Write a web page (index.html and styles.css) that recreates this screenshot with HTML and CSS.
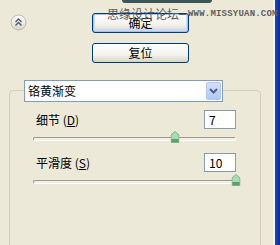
FILE: index.html
```html
<!DOCTYPE html>
<html lang="zh">
<head>
    <meta charset="UTF-8">
    <meta name="viewport" content="width=device-width, initial-scale=1.0">
    <title>铬黄渐变</title>
    <link rel="stylesheet" href="styles.css">
</head>
<body>
    <div class="window">
        <div class="panel">
            <div class="top-tab"></div>

            <div class="head">
                <button class="toggle" type="button" aria-label="收起">
                    <svg width="17" height="17" viewBox="0 0 17 17">
                        <defs>
                            <linearGradient id="tg" x1="0" y1="0" x2="0" y2="1">
                                <stop offset="0" stop-color="#ffffff"/>
                                <stop offset="1" stop-color="#d9d5c7"/>
                            </linearGradient>
                        </defs>
                        <circle cx="8.5" cy="8.5" r="7.5" fill="url(#tg)" stroke="#bdb9a8"/>
                        <path d="M5.5 8 L8.5 5 L11.5 8 M5.5 11.5 L8.5 8.5 L11.5 11.5" fill="none" stroke="#505a6a" stroke-width="1.4"/>
                    </svg>
                </button>
                <div class="actions">
                    <button class="btn btn-default" type="button">确定</button>
                    <button class="btn" type="button">复位</button>
                </div>
            </div>

            <div class="group">
                <div class="combo">
                    <span class="combo-text">铬黄渐变</span>
                    <span class="combo-arrow">
                        <svg width="9" height="6" viewBox="0 0 9 6">
                            <path d="M1 1 L4.5 4.5 L8 1" fill="none" stroke="#4d6185" stroke-width="2"/>
                        </svg>
                    </span>
                </div>

                <div class="field">
                    <span class="label">细节 (<u>D</u>)</span>
                    <span class="value">7</span>
                </div>
                <div class="slider">
                    <div class="track"></div>
                    <span class="thumb" style="left: 70%">
                        <svg width="9" height="12" viewBox="0 0 9 12">
                            <path d="M4.5 0.5 L8.5 4 V11.5 H0.5 V4 Z" fill="#a6dcb3" stroke="#79b488"/>
                            <path d="M1 8 H8 V11 H1 Z" fill="#5c9e6e"/>
                        </svg>
                    </span>
                </div>

                <div class="field field-second">
                    <span class="label">平滑度 (<u>S</u>)</span>
                    <span class="value">10</span>
                </div>
                <div class="slider">
                    <div class="track"></div>
                    <span class="thumb" style="left: 100%">
                        <svg width="9" height="12" viewBox="0 0 9 12">
                            <path d="M4.5 0.5 L8.5 4 V11.5 H0.5 V4 Z" fill="#a6dcb3" stroke="#79b488"/>
                            <path d="M1 8 H8 V11 H1 Z" fill="#5c9e6e"/>
                        </svg>
                    </span>
                </div>
            </div>

            <div class="watermark">思缘设计论坛<span class="dash"></span><span class="site">WWW.MISSYUAN.COM</span></div>
        </div>
        <div class="edge"></div>
    </div>
</body>
</html>
```

FILE: styles.css
```css
body {
    margin: 0;
    padding: 0;
    background-color: #ece9d8; /* XP dialog colour */
    font-family: "Noto Sans CJK SC", "Liberation Sans", sans-serif;
    font-size: 12px;
    color: #000;
}

.window {
    display: flex;
    width: 280px;
    height: 245px;
    overflow: hidden;
}

.panel {
    position: relative;
    width: 273px;
}

/* right window frame */
.edge {
    width: 5px;
    border-left: 2px solid #f6f5ef;
    background: linear-gradient(to right, #1a47bd, #0a2f9c);
}

.top-tab {
    width: 90px;
    height: 3px;
    margin-left: 122px;
    background-color: #3e5459;
    border-radius: 0 0 6px 6px;
}

.head {
    display: flex;
    padding-top: 10px;
}

.toggle {
    width: 17px;
    height: 17px;
    margin: 1px 0 0 10px;
    padding: 0;
    border: none;
    background: none;
    line-height: 0;
}

.actions {
    display: flex;
    flex-direction: column;
    gap: 10px;
    margin-left: 65px;
}

.btn {
    width: 97px;
    height: 20px;
    padding: 0;
    border: 1px solid #003c74;
    border-radius: 3px;
    background: linear-gradient(#ffffff, #f3f2ec 60%, #d8d3c6);
    font-family: inherit;
    font-size: 12px;
    line-height: 16px;
    color: #000;
}

.btn-default {
    box-shadow: inset 0 0 0 1px #a8c2f0, inset 0 -1px 0 2px #cbd9f5;
}

.group {
    position: relative;
    width: 250px;
    height: 200px;
    margin: 27px 0 0 9px;
    border: 1px solid #d0d0bf;
    border-radius: 4px;
}

.combo {
    display: flex;
    align-items: center;
    justify-content: space-between;
    box-sizing: border-box;
    width: 199px;
    height: 22px;
    margin: -11px 0 0 14px;
    padding: 1px;
    border: 1px solid #7f9db9;
    background-color: #fff;
}

.combo-text {
    padding-left: 2px;
    line-height: 18px;
}

.combo-arrow {
    display: flex;
    align-items: center;
    justify-content: center;
    width: 15px;
    height: 18px;
    border: 1px solid #b4c6f2;
    border-radius: 2px;
    box-sizing: border-box;
    background: linear-gradient(#d2defc, #b3c8f6);
}

.field {
    display: flex;
    align-items: center;
    justify-content: space-between;
    margin: 8px 24px 0 26px;
}

.field-second {
    margin-top: 10px;
}

.label {
    line-height: 16px;
}

.value {
    box-sizing: border-box;
    width: 32px;
    height: 19px;
    padding-left: 4px;
    border: 1px solid #8a9aa8;
    background-color: #fff;
    line-height: 17px;
}

.slider {
    position: relative;
    height: 12px;
    margin: 2px 24px 0 23px;
}

.track {
    position: absolute;
    top: 6px;
    left: 0;
    right: 0;
    height: 2px;
    border-top: 1px solid #9d9a8c;
    border-left: 1px solid #9d9a8c;
    border-bottom: 1px solid #fff;
    border-right: 1px solid #fff;
    border-radius: 2px;
    background-color: #f1efe6;
}

.thumb {
    position: absolute;
    top: 0;
    width: 9px;
    height: 12px;
    transform: translateX(-50%);
    line-height: 0;
}

.watermark {
    position: absolute;
    top: 6px;
    left: 107px;
    display: flex;
    align-items: center;
    font-size: 12px;
    line-height: 16px;
    color: #5e5e5e;
    white-space: nowrap;
}

.dash {
    width: 7px;
    height: 1px;
    margin: 0 2px 0 0;
    background-color: #5e5e5e;
}

.site {
    font-family: "Liberation Mono", monospace;
    font-size: 9px;
    font-weight: bold;
    letter-spacing: 0.2px;
}
```
